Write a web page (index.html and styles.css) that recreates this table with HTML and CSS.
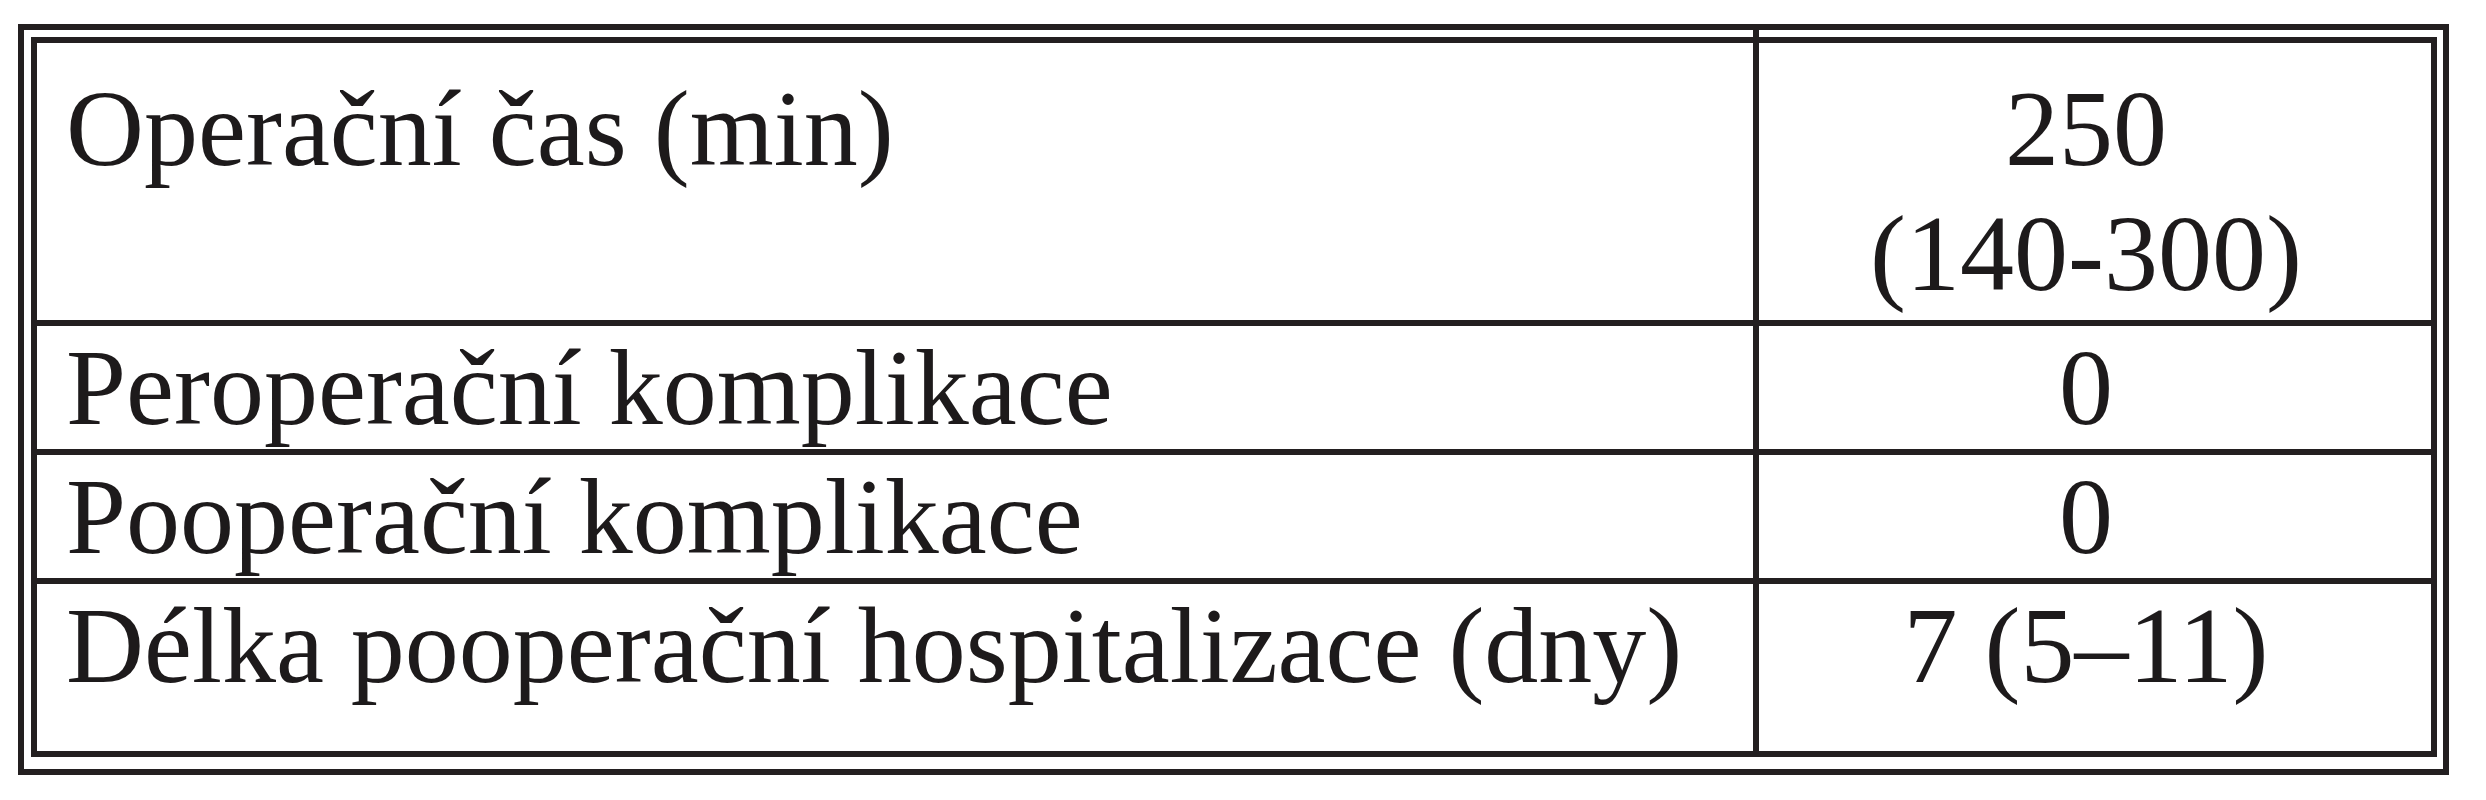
FILE: index.html
```html
<!DOCTYPE html>
<html lang="cs">
<head>
<meta charset="utf-8">
<title>Tabulka</title>
<link rel="stylesheet" href="styles.css">
</head>
<body>
<div class="frame">
  <div class="grid">
    <div class="cell label first">Operační čas (min)</div>
    <div class="cell value first">250<br>(140-300)</div>
    <div class="cell label">Peroperační komplikace</div>
    <div class="cell value">0</div>
    <div class="cell label">Pooperační komplikace</div>
    <div class="cell value">0</div>
    <div class="cell label">Délka pooperační hospitalizace (dny)</div>
    <div class="cell value">7 (5–11)</div>
  </div>
</div>
</body>
</html>
```

FILE: styles.css
```css
html, body {
  background: #ffffff;
}

body {
  margin: 24px 0 0 18px;
  font-family: "Liberation Serif", "Times New Roman", serif;
  color: #1d1a1b;
}

.frame {
  box-sizing: border-box;
  width: 2431px;
  border: 6px solid #231f20;
  padding: 7px 6px 12px 7px;
}

.grid {
  display: grid;
  grid-template-columns: 1716px 672px;
  grid-template-rows: 277px 123px 123px 167px;
  gap: 6px;
  background: #231f20;
  border: 6px solid #231f20;
}

.cell {
  background: #ffffff;
  font-size: 108px;
  line-height: 123px;
  white-space: nowrap;
}

.label {
  padding-left: 29px;
}

.value {
  text-align: center;
  padding-right: 18px;
}

.first {
  padding-top: 23px;
  line-height: 125px;
}

.value.first {
  position: relative;
}

.value.first::before {
  content: "";
  position: absolute;
  left: -6px;
  top: -13px;
  width: 6px;
  height: 13px;
  background: #231f20;
}
```
